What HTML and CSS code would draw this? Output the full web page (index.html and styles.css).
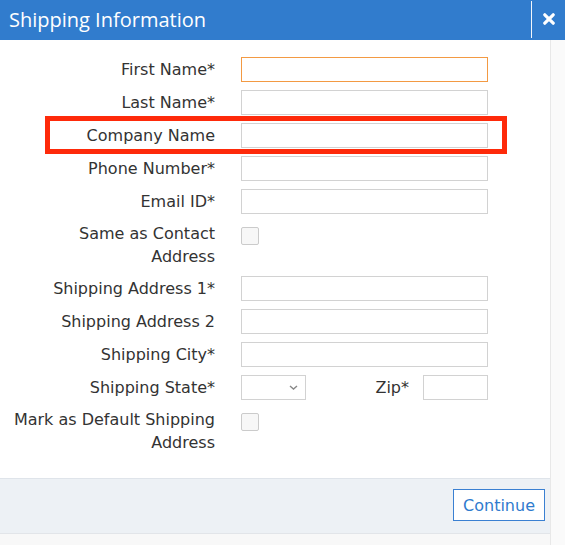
FILE: index.html
```html
<!DOCTYPE html>
<html lang="en">
<head>
<meta charset="utf-8">
<title>Shipping Information</title>
<link rel="stylesheet" href="styles.css">
</head>
<body>
<div class="modal">
  <header class="modal-header">
    <h1 class="modal-title">Shipping Information</h1>
    <button class="close-btn" type="button" aria-label="Close">
      <svg width="12" height="12" viewBox="0 0 12 12"><path d="M1.8 1.8 L10.2 10.2 M10.2 1.8 L1.8 10.2" stroke="#fff" stroke-width="3.2" stroke-linecap="round"/></svg>
    </button>
  </header>
  <div class="modal-main">
    <div class="modal-content">
      <form class="form">
        <label class="lbl">First Name*</label>
        <div class="field-wrap active"><input class="field-inner" type="text"></div>

        <label class="lbl">Last Name*</label>
        <input class="field" type="text">

        <label class="lbl">Company Name</label>
        <input class="field" type="text">

        <label class="lbl">Phone Number*</label>
        <input class="field" type="text">

        <label class="lbl">Email ID*</label>
        <input class="field" type="text">

        <label class="lbl multi">Same as Contact Address</label>
        <div class="check-cell"><input class="check" type="checkbox"></div>

        <label class="lbl">Shipping Address 1*</label>
        <input class="field" type="text">

        <label class="lbl">Shipping Address 2</label>
        <input class="field" type="text">

        <label class="lbl">Shipping City*</label>
        <input class="field" type="text">

        <label class="lbl">Shipping State*</label>
        <div class="state-row">
          <select class="select"><option></option></select>
          <label class="lbl zip-lbl">Zip*</label>
          <input class="field zip" type="text">
        </div>

        <label class="lbl multi">Mark as Default Shipping Address</label>
        <div class="check-cell"><input class="check" type="checkbox"></div>

        <div class="highlight"></div>
      </form>
      <footer class="modal-footer">
        <button class="btn" type="button">Continue</button>
      </footer>
    </div>
    <div class="scroll-track"></div>
  </div>
</div>
</body>
</html>
```
FILE: styles.css
```css
* { box-sizing: border-box; }

html, body {
  margin: 0;
  padding: 0;
  background: #f8f8f8;
}

body {
  width: 565px;
  height: 545px;
  overflow: hidden;
  font-family: "DejaVu Sans", Verdana, sans-serif;
}

.modal {
  display: flex;
  flex-direction: column;
  height: 545px;
}

.modal-header {
  display: flex;
  align-items: stretch;
  height: 40px;
  background: #317ccd;
  flex: none;
}

.modal-title {
  flex: 1;
  margin: 0;
  padding-left: 9px;
  font-family: "Open Sans", sans-serif;
  font-weight: 400;
  font-size: 20px;
  line-height: 40px;
  color: #fff;
}

.close-btn {
  width: 34px;
  margin: 1px 0 2px;
  padding: 0 0 2px 1px;
  border: 0;
  border-left: 1px solid #f2f6fb;
  background: transparent;
  display: flex;
  align-items: center;
  justify-content: center;
}

.close-btn svg { display: block; }

.modal-main {
  flex: 1;
  display: flex;
}

.modal-content {
  width: 550px;
  align-self: flex-start;
}

.scroll-track {
  flex: 1;
  background: #fafafa;
  border-left: 1px solid #e8e8e8;
}

.form {
  position: relative;
  margin: 0;
  background: #fff;
  padding: 17px 0 24px 12px;
  display: grid;
  grid-template-columns: 203px 247px;
  column-gap: 26px;
  row-gap: 8px;
}

.lbl {
  font-size: 16px;
  line-height: 23px;
  color: #333;
  text-align: right;
  align-self: center;
}

.lbl.multi {
  align-self: start;
}

.field {
  -webkit-appearance: none;
  appearance: none;
  display: block;
  width: 247px;
  height: 25px;
  margin: 0;
  border: 1px solid #d2d2d2;
  border-radius: 0;
  background: #fff;
  outline: none;
}

.field-wrap {
  width: 247px;
  height: 25px;
  border: 1px solid #d2d2d2;
  background: #fff;
}

.field-wrap.active {
  border-color: #f39a43;
}

.field-inner {
  display: block;
  width: 100%;
  height: 100%;
  margin: 0;
  padding: 0 2px;
  border: 0;
  background: transparent;
  outline: none;
}

.check-cell {
  padding-top: 5px;
}

.check {
  -webkit-appearance: none;
  appearance: none;
  display: block;
  margin: 0;
  width: 18px;
  height: 18px;
  border: 1px solid #cbcbcb;
  border-radius: 2px;
  background: #f7f7f7;
}

.state-row {
  display: flex;
  align-items: center;
}

.select {
  -webkit-appearance: none;
  appearance: none;
  width: 65px;
  height: 25px;
  margin: 0;
  border: 1px solid #d2d2d2;
  border-radius: 0;
  background-color: #fff;
  background-image: url("data:image/svg+xml,%3Csvg xmlns='http://www.w3.org/2000/svg' width='9' height='5' viewBox='0 0 9 5'%3E%3Cpath d='M1 1 L4.5 4 L8 1' fill='none' stroke='%23888' stroke-width='1.4'/%3E%3C/svg%3E");
  background-repeat: no-repeat;
  background-position: right 7px center;
}

.zip-lbl {
  margin-left: auto;
  margin-right: 14px;
}

.field.zip {
  width: 65px;
}

.highlight {
  position: absolute;
  left: 45px;
  top: 76px;
  width: 462px;
  height: 38px;
  border: 5px solid #fe2a0a;
  pointer-events: none;
}

.modal-footer {
  display: flex;
  justify-content: flex-end;
  height: 56px;
  padding: 10px 5px 0 0;
  background: #edf1f5;
  border-top: 1px solid #dfe4ea;
  border-bottom: 1px solid #e2e5e9;
}

.btn {
  height: 32px;
  padding: 0 9px;
  border: 1px solid #3a80d2;
  border-radius: 0;
  background: #fff;
  color: #2f7bce;
  font-family: "DejaVu Sans", Verdana, sans-serif;
  font-size: 16px;
}
```
